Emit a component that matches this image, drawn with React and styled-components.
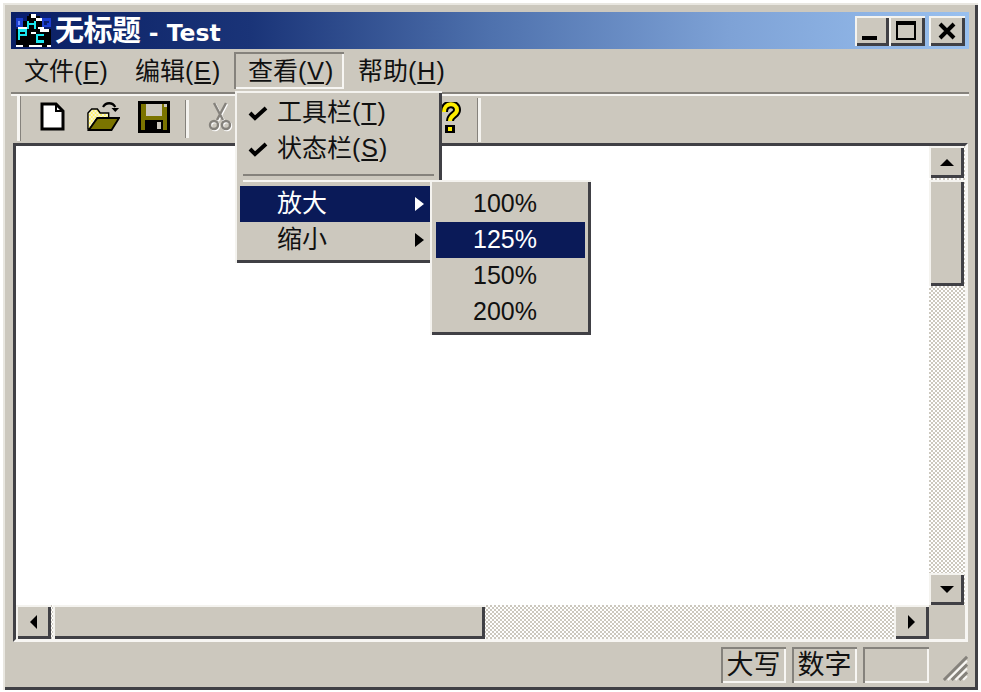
import React from 'react';
import styled, { createGlobalStyle, css } from 'styled-components';

const FACE = '#ccc8be';
const NAVY = '#0a1a58';
const DARK = '#404045';
const MID = '#85827c';

const Global = createGlobalStyle`
  html, body { margin: 0; padding: 0; background: #fff; }
  body { font-family: "Liberation Sans", "Noto Sans CJK SC", sans-serif; font-size: 25px; color: #111; }
  * { box-sizing: border-box; }
  u { text-underline-offset: 2px; text-decoration-thickness: 2px; margin: 0 1px; }
`;

const raised = css`
  background: ${FACE};
  box-shadow: inset 2px 2px 0 #f4f3ef, inset -3px -3px 0 ${DARK};
`;
const sunkenThin = css`
  box-shadow: inset 2px 2px 0 ${MID}, inset -2px -2px 0 #f7f6f3;
`;

const Page = styled.div`
  width: 981px;
  height: 692px;
  padding: 3px 3px 2px 3px;
`;
const Window = styled.div`
  position: relative;
  width: 975px;
  height: 687px;
  display: flex;
  flex-direction: column;
  padding: 9px 9px 0 8px;
  background: ${FACE};
  box-shadow: inset 2px 2px 0 #e9e7e1, inset -3px -3px 0 ${DARK};
`;
const TitleBar = styled.div`
  flex: none;
  height: 37px;
  display: flex;
  align-items: center;
  padding: 0 4px 0 5px;
  background: linear-gradient(90deg, #0a1f64 0%, #1a3478 25%, #4e71ad 50%, #7ea2d6 75%, #99c0ef 100%);
`;
const AppLogo = styled.svg`
  width: 35px;
  height: 33px;
  flex: none;
`;
const TitleText = styled.span`
  margin: -5px 0 0 4px;
  color: #fff;
  font-family: "DejaVu Sans", "Noto Sans CJK SC", sans-serif;
  font-weight: 700;
  font-size: 23.5px;
  white-space: pre;
  flex: 1;
`;
const TitleCjk = styled.span`
  font-family: "Noto Sans CJK SC", sans-serif;
  font-size: 29px;
  font-weight: 700;
  letter-spacing: -0.5px;
`;
const WinButton = styled.div`
  ${raised}
  width: ${p => p.$w}px;
  height: 30px;
  margin-left: ${p => p.$gap || 0}px;
  display: flex;
  align-items: center;
  justify-content: center;
  flex: none;
`;
const MenuBar = styled.div`
  flex: none;
  height: 43px;
  display: flex;
  padding-top: 3px;
  box-sizing: border-box;
`;
const MenuItem = styled.div`
  position: relative;
  width: ${p => p.$w}px;
  height: 37px;
  padding: 0 0 0 ${p => p.$pl}px;
  line-height: 38px;
  font-size: 25px;
  white-space: nowrap;
  ${p => p.$open && css`box-shadow: inset 2px 2px 0 ${MID}, inset -2px -2px 0 #f7f6f3;`}
`;
const Rule = styled.div`
  flex: none;
  height: 4px;
  border-top: 2px solid ${MID};
  border-bottom: 2px solid #f7f6f3;
`;
const ToolBar = styled.div`
  flex: none;
  height: 47px;
  display: flex;
  align-items: flex-start;
  padding-left: 6px;
`;
const Gripper = styled.div`
  width: 4px;
  height: 45px;
  flex: none;
  border-left: 3px solid #f7f6f3;
  border-right: 1px solid ${MID};
`;
const ToolIcon = styled.svg`
  flex: none;
  margin-left: ${p => p.$ml}px;
  margin-top: ${p => p.$mt || 6}px;
  width: ${p => p.$w}px;
  height: ${p => p.$h}px;
`;
const ToolSep = styled.div`
  flex: none;
  margin-left: ${p => p.$ml}px;
  margin-top: ${p => p.$mt || 4}px;
  width: 3px;
  height: ${p => p.$h || 38}px;
  background: #f4f3ef;
  box-shadow: -1px 0 0 ${MID};
`;
const Client = styled.div`
  flex: none;
  margin: 0 0 0 2px;
  width: 955px;
  height: 499px;
  display: grid;
  grid-template-columns: 1fr 36px;
  grid-template-rows: 1fr 34px;
  background: ${FACE};
  border-top: 3px solid ${DARK};
  border-left: 3px solid ${DARK};
  border-right: 3px solid #f7f6f3;
  border-bottom: 3px solid #f7f6f3;
`;
const Canvas = styled.div`
  background: #fff;
`;
const dither = css`
  background-color: #fff;
  background-image: conic-gradient(${FACE} 25%, transparent 0 50%, ${FACE} 0 75%, transparent 0);
  background-size: 4px 4px;
`;
const VScroll = styled.div`
  display: flex;
  flex-direction: column;
  ${dither}
`;
const HScroll = styled.div`
  display: flex;
  ${dither}
`;
const ScrollBtn = styled.div`
  ${raised}
  flex: none;
  width: ${p => p.$w}px;
  height: ${p => p.$h}px;
  display: flex;
  align-items: center;
  justify-content: center;
`;
const Thumb = styled.div`
  ${raised}
  flex: none;
  margin: ${p => p.$m || 0};
  width: ${p => p.$w}px;
  height: ${p => p.$h}px;
`;
const Track = styled.div`
  flex: 1;
`;
const Corner = styled.div`
  background: ${FACE};
`;
const StatusBar = styled.div`
  flex: 1;
  position: relative;
  display: flex;
  padding: 5px 0 0 710px;
  gap: 6px;
`;
const Pane = styled.div`
  ${sunkenThin}
  width: ${p => p.$w}px;
  height: 36px;
  font-size: 27px;
  line-height: 36px;
  text-align: center;
  flex: none;
`;
const Grip = styled.svg`
  position: absolute;
  right: 1px;
  bottom: 9px;
  width: 27px;
  height: 27px;
`;
const Menu = styled.div`
  position: absolute;
  z-index: ${p => p.$z || 5};
  left: ${p => p.$l}px;
  top: ${p => p.$t}px;
  width: ${p => p.$w}px;
  height: ${p => p.$h}px;
  padding: ${p => p.$pad};
  background: ${FACE};
  color: #111;
  box-shadow: inset 2px 2px 0 #f4f3ef, inset -3px -3px 0 ${DARK};
`;
const Row = styled.div`
  position: relative;
  height: 36px;
  line-height: 35px;
  font-size: 25px;
  padding-left: ${p => p.$pl}px;
  white-space: nowrap;
  ${p => p.$active && css`background: ${NAVY}; color: #fff;`}
`;
const Check = styled.svg`
  position: absolute;
  left: 8px;
  top: 10px;
  width: 20px;
  height: 16px;
`;
const Arrow = styled.svg`
  position: absolute;
  right: 11px;
  top: 10px;
  width: 12px;
  height: 16px;
`;
const MenuSep = styled.div`
  height: 19px;
  padding-top: 7px;
  margin: 0 3px;
  &::before {
    content: '';
    display: block;
    height: 4px;
    border-top: 2px solid ${MID};
    border-bottom: 2px solid #f7f6f3;
  }
`;

const Tri = ({ dir, size = 16 }) => {
  const pts = { up: '1,9 8,2 15,9', down: '1,2 8,9 15,2', left: '9,1 2,8 9,15', right: '2,1 9,8 2,15' }[dir];
  const vb = dir === 'up' || dir === 'down' ? '0 0 16 11' : '0 0 11 16';
  const w = dir === 'up' || dir === 'down' ? size : size * 11 / 16;
  const h = dir === 'up' || dir === 'down' ? size * 11 / 16 : size;
  return <svg viewBox={vb} width={w} height={h}><polygon points={pts} fill="#000" /></svg>;
};

const LogoArt = () => (
  <AppLogo viewBox="0 0 16 15" shapeRendering="crispEdges">
    <rect width="16" height="15" fill="#000" />
    <rect width="16" height="7" fill="#0a1f70" />
    <rect x="0" y="2" width="3" height="4" fill="#1c3fd0" />
    <rect x="12" y="2" width="4" height="4" fill="#1c3fd0" />
    <rect x="3" y="3" width="9" height="4" fill="#000" />
    <rect x="5" y="1" width="6" height="3" fill="#000" />
    <rect x="6" y="0" width="3" height="1" fill="#000" />
    <rect x="7" y="0" width="2" height="2" fill="#fff" />
    <rect x="9" y="2" width="3" height="1" fill="#fff" />
    <rect x="5" y="3" width="1" height="4" fill="#19e6ee" />
    <rect x="8" y="3" width="1" height="4" fill="#19e6ee" />
    <rect x="6" y="4" width="2" height="1" fill="#19e6ee" />
    <rect x="13" y="3" width="2" height="1" fill="#0a1f70" />
    <rect x="13" y="3" width="1" height="2" fill="#0a1f70" />
    <rect x="1" y="3" width="1" height="2" fill="#6f8cff" />
    <rect x="1" y="6" width="4" height="1" fill="#fff" />
    <rect x="1" y="7" width="1" height="5" fill="#19e6ee" />
    <rect x="2" y="7" width="3" height="1" fill="#19e6ee" />
    <rect x="2" y="9" width="3" height="1" fill="#19e6ee" />
    <rect x="4" y="8" width="1" height="1" fill="#19e6ee" />
    <rect x="7" y="8" width="2" height="1" fill="#fff" />
    <rect x="10" y="6" width="3" height="1" fill="#fff" />
    <rect x="11" y="7" width="4" height="1" fill="#fff" />
    <rect x="9" y="9" width="4" height="1" fill="#19e6ee" />
    <rect x="9" y="10" width="1" height="3" fill="#19e6ee" />
    <rect x="10" y="12" width="3" height="1" fill="#19e6ee" />
    <rect x="0" y="14" width="3" height="1" fill="#fff" />
    <rect x="6" y="14" width="6" height="1" fill="#fff" />
    <rect x="14" y="14" width="2" height="1" fill="#fff" />
  </AppLogo>
);

const DocIcon = () => (
  <ToolIcon $ml={19} $w={25} $h={29} viewBox="0 0 25 29">
    <path d="M2 2H16L23 9V27H2Z" fill="#fff" stroke="#000" strokeWidth="3" strokeLinejoin="miter" />
    <path d="M16 2V9H23" fill="none" stroke="#000" strokeWidth="2" />
  </ToolIcon>
);
const FolderIcon = () => (
  <ToolIcon $ml={22} $w={33} $h={29} viewBox="0 0 35 29" preserveAspectRatio="none">
    <defs>
      <pattern id="yd" width="4" height="4" patternUnits="userSpaceOnUse">
        <rect width="4" height="4" fill="#fff36a" />
        <rect width="2" height="2" fill="#f4f4e0" />
        <rect x="2" y="2" width="2" height="2" fill="#f4f4e0" />
      </pattern>
    </defs>
    <path d="M1 11L5 7H11L14 11H23V16H11L3 27H1Z" fill="url(#yd)" stroke="#000" strokeWidth="1.5" />
    <path d="M2 28L11 16H34L26 28Z" fill="#7b7400" stroke="#000" strokeWidth="2" />
    <path d="M17 5C20 0 27 0 30 5" fill="none" stroke="#000" strokeWidth="2.4" />
    <path d="M26 6H34L30 10Z" fill="#000" />
  </ToolIcon>
);
const SaveIcon = () => (
  <ToolIcon $ml={18} $mt={5} $w={32} $h={32} viewBox="0 0 33 32" shapeRendering="crispEdges">
    <rect x="0" y="0" width="33" height="32" fill="#000" />
    <rect x="3" y="3" width="27" height="26" fill="#7b7400" />
    <rect x="8" y="3" width="17" height="12" fill="#ccc8be" />
    <rect x="7" y="19" width="19" height="10" fill="#000" />
    <rect x="20" y="21" width="4" height="7" fill="#ccc8be" />
    <rect x="27" y="3" width="3" height="3" fill="#ccc8be" />
  </ToolIcon>
);
const CutIcon = () => (
  <ToolIcon $ml={19} $w={25} $h={31} viewBox="0 0 25 31">
    <g fill="none" stroke="#fff" strokeWidth="2.4" transform="translate(1 1)">
      <path d="M6 1L15 18M18 1L9 18" />
      <circle cx="6" cy="23" r="4" /><circle cx="18" cy="23" r="4" />
    </g>
    <g fill="none" stroke="#85827c" strokeWidth="2.4">
      <path d="M6 1L15 18M18 1L9 18" />
      <circle cx="6" cy="23" r="4" /><circle cx="18" cy="23" r="4" />
    </g>
  </ToolIcon>
);
const HelpIcon = () => (
  <ToolIcon $ml={206} $w={22} $h={31} viewBox="0 0 22 31">
    <path d="M5 10C5 0 18 0 18 8C18 13 11 13 11 19" fill="none" stroke="#000" strokeWidth="8" />
    <rect x="6" y="23" width="10" height="8" fill="#000" />
    <path d="M5 10C5 0 18 0 18 8C18 13 11 13 11 19" fill="none" stroke="#ffee00" strokeWidth="4" />
    <rect x="9" y="25" width="4" height="4" fill="#ffee00" />
  </ToolIcon>
);

const CheckMark = () => (
  <Check viewBox="0 0 20 16"><path d="M2 8L7 13L18 3" fill="none" stroke="#000" strokeWidth="4" /></Check>
);
const RowArrow = ({ light }) => (
  <Arrow viewBox="0 0 12 16"><polygon points="1,1 10,8 1,15" fill={light ? '#fff' : '#000'} /></Arrow>
);

export default function App() {
  return (
    <Page>
      <Global />
      <Window>
        <TitleBar>
          <LogoArt />
          <TitleText><TitleCjk>无标题</TitleCjk> - Test</TitleText>
          <WinButton $w={34}>
            <svg width="16" height="20" viewBox="0 0 16 20" shapeRendering="crispEdges" style={{ marginRight: 4 }}><rect x="0" y="15" width="15" height="4" fill="#000" /></svg>
          </WinButton>
          <WinButton $w={36}>
            <svg width="20" height="19" viewBox="0 0 20 19" shapeRendering="crispEdges" style={{ marginRight: 3 }}><path d="M0 0H20V19H0ZM2 4V17H18V4Z" fillRule="evenodd" fill="#000" /></svg>
          </WinButton>
          <WinButton $w={36} $gap={4}>
            <svg width="20" height="18" viewBox="0 0 20 18"><path d="M3 2L17 16M17 2L3 16" stroke="#000" strokeWidth="4" /></svg>
          </WinButton>
        </TitleBar>
        <MenuBar>
          <MenuItem $w={110} $pl={13}>文件(<u>F</u>)</MenuItem>
          <MenuItem $w={113} $pl={14}>编辑(<u>E</u>)</MenuItem>
          <MenuItem $w={110} $pl={14} $open>
            查看(<u>V</u>)
            <Menu $l={1} $t={39} $w={207} $h={172} $pad="4px 5px 5px 5px">
              <Row $pl={37}><CheckMark />工具栏(<u>T</u>)</Row>
              <Row $pl={37}><CheckMark />状态栏(<u>S</u>)</Row>
              <MenuSep />
              <Row $pl={37} $active>
                放大<RowArrow light />
                <Menu $z={6} $l={190} $t={-6} $w={161} $h={155} $pad="6px 6px 5px 6px">
                  <Row $pl={37}>100%</Row>
                  <Row $pl={37} $active>125%</Row>
                  <Row $pl={37}>150%</Row>
                  <Row $pl={37}>200%</Row>
                </Menu>
              </Row>
              <Row $pl={37}>缩小<RowArrow /></Row>
            </Menu>
          </MenuItem>
          <MenuItem $w={110} $pl={14}>帮助(<u>H</u>)</MenuItem>
        </MenuBar>
        <Rule />
        <ToolBar>
          <Gripper />
          <DocIcon />
          <FolderIcon />
          <SaveIcon />
          <ToolSep $ml={16} />
          <CutIcon />
          <HelpIcon />
          <ToolSep $ml={17} $mt={2} $h={44} />
        </ToolBar>
        <Client>
          <Canvas />
          <VScroll>
            <ScrollBtn $w={35} $h={32}><Tri dir="up" /></ScrollBtn>
            <Thumb $m="2px 0 0 0" $w={35} $h={106} />
            <Track />
            <ScrollBtn $w={35} $h={32}><Tri dir="down" /></ScrollBtn>
          </VScroll>
          <HScroll>
            <ScrollBtn $w={35} $h={34}><Tri dir="left" /></ScrollBtn>
            <Thumb $m="0 0 0 2px" $w={432} $h={34} />
            <Track />
            <ScrollBtn $w={35} $h={34}><Tri dir="right" /></ScrollBtn>
          </HScroll>
          <Corner />
        </Client>
        <StatusBar>
          <Pane $w={65}>大写</Pane>
          <Pane $w={65}>数字</Pane>
          <Pane $w={66} />
          <Grip viewBox="0 0 28 28">
            <path d="M27 3L3 27M27 11L11 27M27 19L19 27" stroke="#85827c" strokeWidth="3" />
            <path d="M27 7L7 27M27 15L15 27M27 23L23 27" stroke="#f7f6f3" strokeWidth="2" />
          </Grip>
        </StatusBar>
      </Window>
    </Page>
  );
}
